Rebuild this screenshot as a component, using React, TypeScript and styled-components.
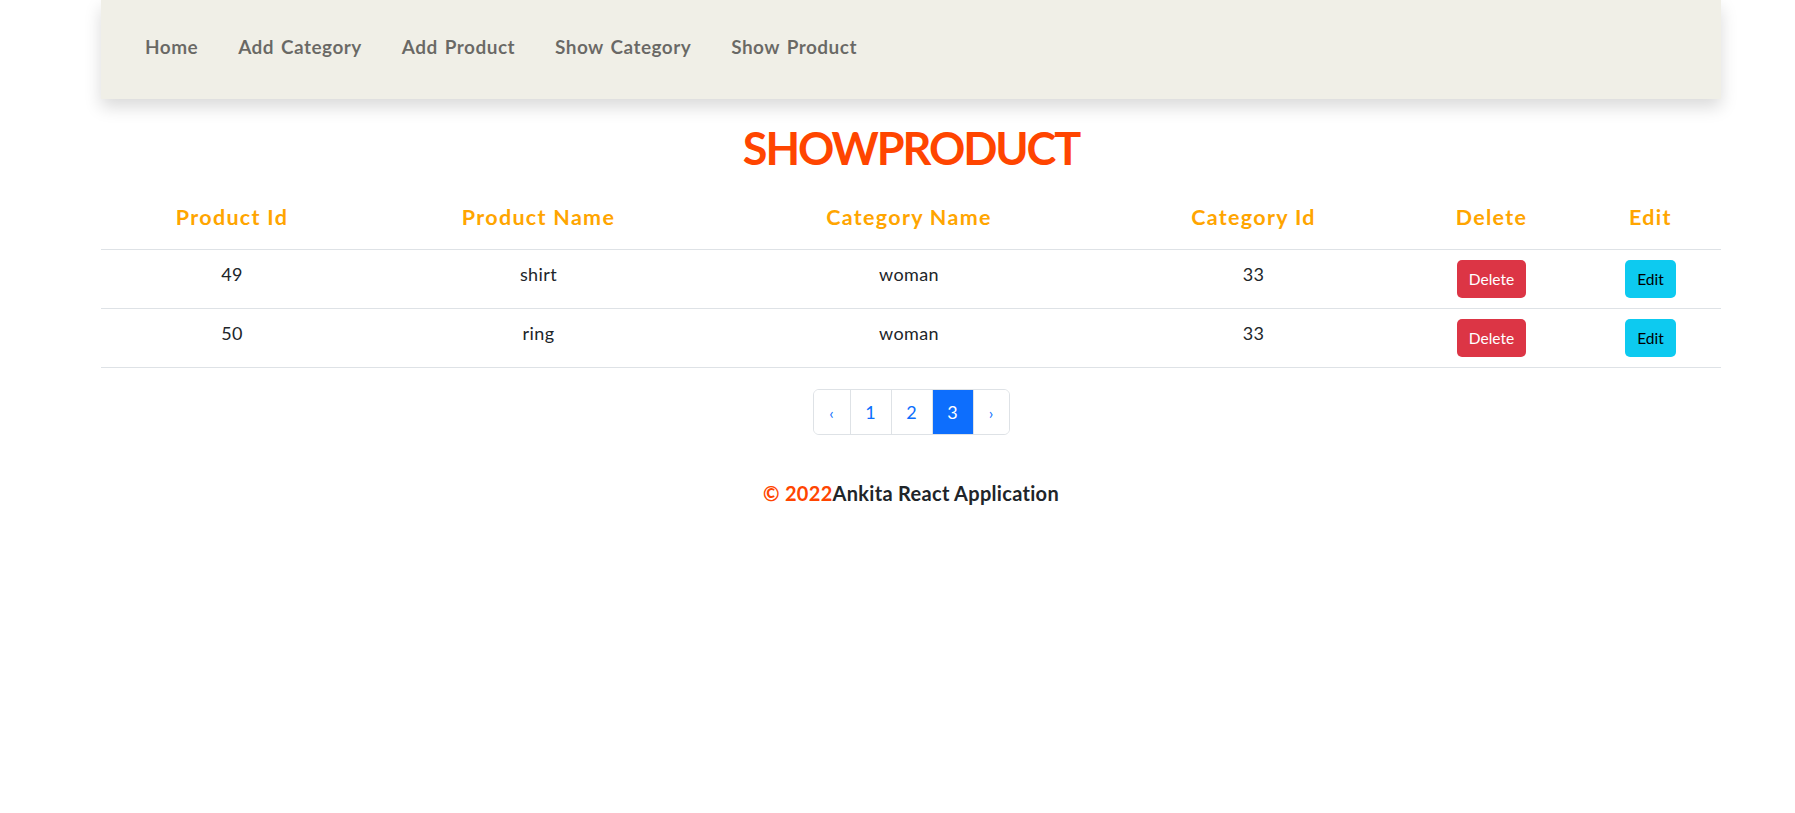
import React from "react";
import styled, { createGlobalStyle } from "styled-components";

const GlobalStyle = createGlobalStyle`
  html, body { margin: 0; padding: 0; background: #ffffff; }
  body {
    font-family: Lato, "Noto Sans", sans-serif;
    color: #212529;
  }
  * { box-sizing: border-box; }
`;

const Page = styled.div`
  width: 1620px;
  margin-left: 101px;
  display: flex;
  flex-direction: column;
`;

const NavBar = styled.nav`
  height: 99px;
  background: #f0efe7;
  box-shadow: 0 8px 16px rgba(0, 0, 0, 0.15);
  display: flex;
  align-items: center;
  gap: 40px;
  padding-left: 44px;
  padding-bottom: 7px;
`;

const NavLink = styled.a`
  font-size: 19px;
  font-weight: 700;
  letter-spacing: 0.45px;
  word-spacing: 2px;
  color: rgba(0, 0, 0, 0.57);
  text-decoration: none;
  cursor: pointer;
`;

const Title = styled.h1`
  margin: 22px 0 0;
  line-height: 54px;
  font-size: 45px;
  font-weight: 700;
  letter-spacing: -2.1px;
  color: #ff4500;
  text-align: center;
`;

const Table = styled.div`
  margin-top: 10px;
  display: grid;
  grid-template-columns: 262px 351px 390px 299px 177px 141px;
`;

const HeadCell = styled.div`
  height: 65px;
  border-bottom: 1px solid #dee2e6;
  display: flex;
  align-items: center;
  justify-content: center;
  font-size: 21.5px;
  font-weight: 700;
  letter-spacing: 1.3px;
  color: #ffa500;
`;

const Cell = styled.div<{ $button?: boolean }>`
  height: 59px;
  border-bottom: 1px solid #dee2e6;
  display: flex;
  justify-content: center;
  align-items: flex-start;
  padding-top: ${(p) => (p.$button ? "10px" : "11px")};
  font-size: 18px;
  letter-spacing: 0.4px;
  line-height: 26px;
  color: #212529;
`;

const ActionButton = styled.button<{ $variant: "danger" | "info" }>`
  height: 38px;
  padding: 0 12px;
  border: none;
  border-radius: 5px;
  font-family: Lato, "Noto Sans", sans-serif;
  font-size: 15.5px;
  background: ${(p) => (p.$variant === "danger" ? "#dc3545" : "#0dcaf0")};
  color: ${(p) => (p.$variant === "danger" ? "#ffffff" : "#000000")};
  cursor: pointer;
`;

const PaginationRow = styled.div`
  margin-top: 21px;
  display: flex;
  justify-content: center;
`;

const Pagination = styled.ul`
  display: flex;
  list-style: none;
  margin: 0;
  padding: 0;
  border: 1px solid #dee2e6;
  border-radius: 6px;
  overflow: hidden;
  height: 46px;
`;

const PageItem = styled.li<{ $active?: boolean; $arrow?: boolean }>`
  display: flex;
  align-items: center;
  justify-content: center;
  width: ${(p) => (p.$arrow ? "36px" : "41px")};
  border-left: 1px solid #dee2e6;
  &:first-child { border-left: none; }
  font-size: ${(p) => (p.$arrow ? "16px" : "18px")};
  color: ${(p) => (p.$active ? "#ffffff" : "#0d6efd")};
  background: ${(p) => (p.$active ? "#0d6efd" : "#ffffff")};
  cursor: pointer;
`;

const Footer = styled.footer`
  margin-top: 46px;
  text-align: center;
  font-size: 20px;
  font-weight: 700;
  letter-spacing: 0.3px;
  line-height: 24px;
  color: #212529;
`;

const Copy = styled.span`
  color: #ff4500;
`;

const products = [
  { id: 49, name: "shirt", category: "woman", categoryId: 33 },
  { id: 50, name: "ring", category: "woman", categoryId: 33 },
];

const headers = ["Product Id", "Product Name", "Category Name", "Category Id", "Delete", "Edit"];

export default function App() {
  return (
    <>
      <GlobalStyle />
      <Page>
        <NavBar>
          <NavLink>Home</NavLink>
          <NavLink>Add Category</NavLink>
          <NavLink>Add Product</NavLink>
          <NavLink>Show Category</NavLink>
          <NavLink>Show Product</NavLink>
        </NavBar>
        <Title>SHOWPRODUCT</Title>
        <Table>
          {headers.map((h) => (
            <HeadCell key={h}>{h}</HeadCell>
          ))}
          {products.map((p) => (
            <React.Fragment key={p.id}>
              <Cell>{p.id}</Cell>
              <Cell>{p.name}</Cell>
              <Cell>{p.category}</Cell>
              <Cell>{p.categoryId}</Cell>
              <Cell $button>
                <ActionButton $variant="danger">Delete</ActionButton>
              </Cell>
              <Cell $button>
                <ActionButton $variant="info">Edit</ActionButton>
              </Cell>
            </React.Fragment>
          ))}
        </Table>
        <PaginationRow>
          <Pagination>
            <PageItem $arrow>‹</PageItem>
            <PageItem>1</PageItem>
            <PageItem>2</PageItem>
            <PageItem $active>3</PageItem>
            <PageItem $arrow>›</PageItem>
          </Pagination>
        </PaginationRow>
        <Footer>
          <Copy>© 2022</Copy>Ankita React Application
        </Footer>
      </Page>
    </>
  );
}
